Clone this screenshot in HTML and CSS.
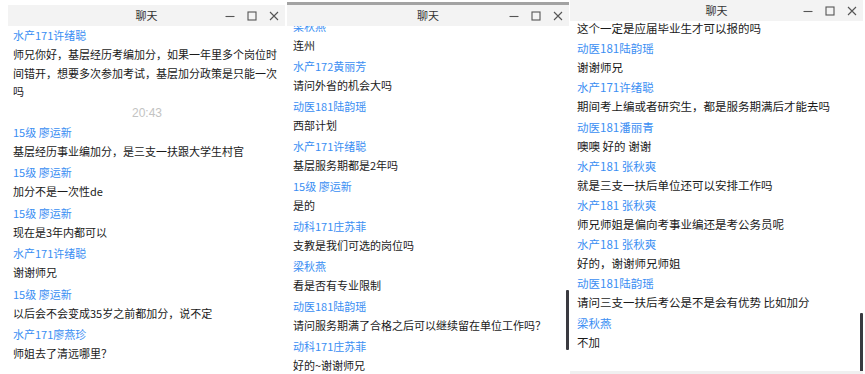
FILE: index.html
```html
<!DOCTYPE html>
<html lang="zh-CN">
<head>
    <meta charset="UTF-8">
    <title>聊天</title>
    <link rel="stylesheet" href="styles.css">
</head>
<body>
    <div class="desk">
        <!-- window 1 -->
        <div class="chat chat-one">
            <div class="titlebar">
                <span class="title">聊天</span>
                <div class="controls">
                    <span class="ctl"><svg width="10" height="10" viewBox="0 0 10 10"><path d="M0.5 5.5h9" stroke="#555" stroke-width="1.1"/></svg></span>
                    <span class="ctl"><svg width="10" height="10" viewBox="0 0 10 10"><rect x="1" y="1" width="8" height="8" fill="none" stroke="#555" stroke-width="1.1"/></svg></span>
                    <span class="ctl"><svg width="10" height="10" viewBox="0 0 10 10"><path d="M1 1l8 8M9 1l-8 8" stroke="#555" stroke-width="1.1"/></svg></span>
                </div>
            </div>
            <div class="messages">
                <div class="msg-list">
                    <div class="msg">
                        <div class="name">水产171许绪聪</div>
                        <div class="text">师兄你好，基层经历考编加分，如果一年里多个岗位时间错开，想要多次参加考试，基层加分政策是只能一次吗</div>
                    </div>
                    <div class="time">20:43</div>
                    <div class="msg">
                        <div class="name">15级 廖运新</div>
                        <div class="text">基层经历事业编加分，是三支一扶跟大学生村官</div>
                    </div>
                    <div class="msg">
                        <div class="name">15级 廖运新</div>
                        <div class="text">加分不是一次性de</div>
                    </div>
                    <div class="msg">
                        <div class="name">15级 廖运新</div>
                        <div class="text">现在是3年内都可以</div>
                    </div>
                    <div class="msg">
                        <div class="name">水产171许绪聪</div>
                        <div class="text">谢谢师兄</div>
                    </div>
                    <div class="msg">
                        <div class="name">15级 廖运新</div>
                        <div class="text">以后会不会变成35岁之前都加分，说不定</div>
                    </div>
                    <div class="msg">
                        <div class="name">水产171廖燕珍</div>
                        <div class="text">师姐去了清远哪里？</div>
                    </div>
                </div>
            </div>
        </div>

        <!-- window 2 -->
        <div class="chat chat-two">
            <div class="titlebar">
                <span class="title">聊天</span>
                <div class="controls">
                    <span class="ctl"><svg width="10" height="10" viewBox="0 0 10 10"><path d="M0.5 5.5h9" stroke="#555" stroke-width="1.1"/></svg></span>
                    <span class="ctl"><svg width="10" height="10" viewBox="0 0 10 10"><rect x="1" y="1" width="8" height="8" fill="none" stroke="#555" stroke-width="1.1"/></svg></span>
                    <span class="ctl"><svg width="10" height="10" viewBox="0 0 10 10"><path d="M1 1l8 8M9 1l-8 8" stroke="#555" stroke-width="1.1"/></svg></span>
                </div>
            </div>
            <div class="messages">
                <div class="msg-list">
                    <div class="msg">
                        <div class="name">梁秋燕</div>
                        <div class="text">连州</div>
                    </div>
                    <div class="msg">
                        <div class="name">水产172黄丽芳</div>
                        <div class="text">请问外省的机会大吗</div>
                    </div>
                    <div class="msg">
                        <div class="name">动医181陆韵瑶</div>
                        <div class="text">西部计划</div>
                    </div>
                    <div class="msg">
                        <div class="name">水产171许绪聪</div>
                        <div class="text">基层服务期都是2年吗</div>
                    </div>
                    <div class="msg">
                        <div class="name">15级 廖运新</div>
                        <div class="text">是的</div>
                    </div>
                    <div class="msg">
                        <div class="name">动科171庄苏菲</div>
                        <div class="text">支教是我们可选的岗位吗</div>
                    </div>
                    <div class="msg">
                        <div class="name">梁秋燕</div>
                        <div class="text">看是否有专业限制</div>
                    </div>
                    <div class="msg">
                        <div class="name">动医181陆韵瑶</div>
                        <div class="text">请问服务期满了合格之后可以继续留在单位工作吗？</div>
                    </div>
                    <div class="msg">
                        <div class="name">动科171庄苏菲</div>
                        <div class="text">好的~谢谢师兄</div>
                    </div>
                </div>
                <div class="thumb"></div>
            </div>
        </div>

        <!-- window 3 -->
        <div class="chat chat-three">
            <div class="titlebar">
                <span class="title">聊天</span>
                <div class="controls">
                    <span class="ctl"><svg width="10" height="10" viewBox="0 0 10 10"><path d="M0.5 5.5h9" stroke="#555" stroke-width="1.1"/></svg></span>
                    <span class="ctl"><svg width="10" height="10" viewBox="0 0 10 10"><rect x="1" y="1" width="8" height="8" fill="none" stroke="#555" stroke-width="1.1"/></svg></span>
                    <span class="ctl"><svg width="10" height="10" viewBox="0 0 10 10"><path d="M1 1l8 8M9 1l-8 8" stroke="#555" stroke-width="1.1"/></svg></span>
                </div>
            </div>
            <div class="messages">
                <div class="msg-list">
                    <div class="msg">
                        <div class="text">这个一定是应届毕业生才可以报的吗</div>
                    </div>
                    <div class="msg">
                        <div class="name">动医181陆韵瑶</div>
                        <div class="text">谢谢师兄</div>
                    </div>
                    <div class="msg">
                        <div class="name">水产171许绪聪</div>
                        <div class="text">期间考上编或者研究生，都是服务期满后才能去吗</div>
                    </div>
                    <div class="msg">
                        <div class="name">动医181潘丽青</div>
                        <div class="text">噢噢 好的 谢谢</div>
                    </div>
                    <div class="msg">
                        <div class="name">水产181 张秋爽</div>
                        <div class="text">就是三支一扶后单位还可以安排工作吗</div>
                    </div>
                    <div class="msg">
                        <div class="name">水产181 张秋爽</div>
                        <div class="text">师兄师姐是偏向考事业编还是考公务员呢</div>
                    </div>
                    <div class="msg">
                        <div class="name">水产181 张秋爽</div>
                        <div class="text">好的，谢谢师兄师姐</div>
                    </div>
                    <div class="msg">
                        <div class="name">动医181陆韵瑶</div>
                        <div class="text">请问三支一扶后考公是不是会有优势 比如加分</div>
                    </div>
                    <div class="msg">
                        <div class="name">梁秋燕</div>
                        <div class="text">不加</div>
                    </div>
                </div>
                <div class="thumb"></div>
            </div>
        </div>
    </div>
</body>
</html>
```

FILE: styles.css
```css
html, body {
    margin: 0;
    padding: 0;
    background: #fff;
    height: 374px;
    overflow: hidden;
}
body {
    font-family: "Noto Sans CJK SC", "Liberation Sans", sans-serif;
    color: #1a1a1a;
}
.desk {
    display: flex;
    height: 374px;
    padding-left: 8px;
}
.chat {
    display: flex;
    flex-direction: column;
    height: 374px;
    background: #fff;
    box-sizing: border-box;
}
.chat-one {
    width: 277px;
    padding-top: 5px;
}
.chat-two {
    width: 282px;
    margin-left: 2px;
    padding-top: 2px;
}
.chat-three {
    width: 293px;
    margin-left: 1px;
}
.titlebar {
    position: relative;
    flex: none;
    height: 21px;
    background: #f3f3f3;
    display: flex;
    align-items: center;
    justify-content: center;
    z-index: 2;
}
.chat-two .titlebar {
    border-top: 3px solid #a3a3a3;
}
.title {
    font-size: 11px;
    color: #333;
    line-height: 21px;
}
.controls {
    position: absolute;
    right: 0;
    top: 0;
    height: 21px;
    display: flex;
}
.ctl {
    width: 22px;
    height: 21px;
    display: flex;
    align-items: center;
    justify-content: center;
}
.messages {
    position: relative;
    flex: 1;
    overflow: hidden;
}
.msg-list {
    padding-left: 5px;
    padding-right: 4px;
    font-size: 11px;
}
.chat-two .msg-list {
    margin-top: -9px;
    padding-left: 6px;
}
.chat-three .msg-list {
    margin-top: -2px;
    padding-left: 7px;
    font-size: 11.5px;
}
.msg {
    margin-bottom: 3px;
}
.chat-two .msg {
    margin-bottom: 2.5px;
}
.chat-three .msg {
    margin-bottom: 1.7px;
}
.name {
    color: #3a8ef3;
    line-height: 19px;
    white-space: nowrap;
}
.text {
    line-height: 18.5px;
}
.time {
    text-align: center;
    font-family: "Liberation Sans", sans-serif;
    font-size: 12px;
    color: #c3c3c3;
    line-height: 19px;
    margin-top: 2px;
}
.thumb {
    position: absolute;
    right: 0;
    width: 3px;
    background: #3a3a40;
    border-radius: 1px;
}
.chat-two .thumb {
    top: 264px;
    height: 60px;
}
.chat-three .thumb {
    top: 292px;
    height: 70px;
}
.chat-three .messages {
    border-bottom: 3px solid #f0f0f0;
}
```
